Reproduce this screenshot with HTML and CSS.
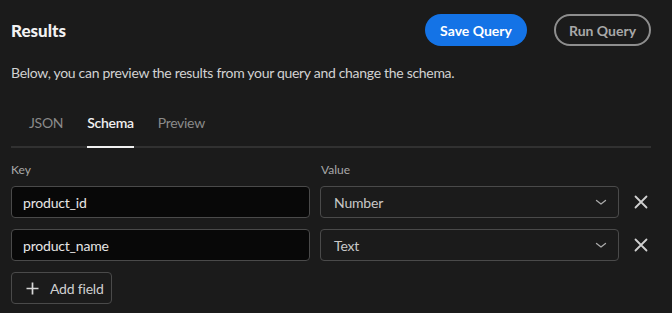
FILE: index.html
```html
<!DOCTYPE html>
<html lang="en">
<head>
    <meta charset="UTF-8">
    <title>Results</title>
    <link rel="stylesheet" href="styles.css">
</head>
<body>
    <div class="panel">
        <div class="header">
            <h1 class="title">Results</h1>
            <div class="actions">
                <button class="btn btn-primary">Save Query</button>
                <button class="btn btn-outline">Run Query</button>
            </div>
        </div>
        <p class="description">Below, you can preview the results from your query and change the schema.</p>

        <div class="tabs">
            <div class="tab">JSON</div>
            <div class="tab active">Schema</div>
            <div class="tab">Preview</div>
        </div>

        <div class="schema">
            <div class="schema-row labels">
                <div class="label">Key</div>
                <div class="label">Value</div>
                <div class="spacer"></div>
            </div>
            <div class="schema-row">
                <div class="key-input">product_id</div>
                <div class="select">
                    <span>Number</span>
                    <svg class="chevron" width="12" height="12" viewBox="0 0 12 12"><path d="M1.5 4.5 L6 8 L10.5 4.5" fill="none" stroke="#a8a8a8" stroke-width="1.3" stroke-linecap="round" stroke-linejoin="round"/></svg>
                </div>
                <button class="remove">
                    <svg width="14" height="14" viewBox="0 0 14 14"><path d="M1.5 1.5 L12.5 12.5 M12.5 1.5 L1.5 12.5" stroke="#d0d0d0" stroke-width="1.8" stroke-linecap="round"/></svg>
                </button>
            </div>
            <div class="schema-row">
                <div class="key-input">product_name</div>
                <div class="select">
                    <span>Text</span>
                    <svg class="chevron" width="12" height="12" viewBox="0 0 12 12"><path d="M1.5 4.5 L6 8 L10.5 4.5" fill="none" stroke="#a8a8a8" stroke-width="1.3" stroke-linecap="round" stroke-linejoin="round"/></svg>
                </div>
                <button class="remove">
                    <svg width="14" height="14" viewBox="0 0 14 14"><path d="M1.5 1.5 L12.5 12.5 M12.5 1.5 L1.5 12.5" stroke="#d0d0d0" stroke-width="1.8" stroke-linecap="round"/></svg>
                </button>
            </div>
        </div>

        <button class="add-field">
            <svg width="13" height="13" viewBox="0 0 13 13"><path d="M6.5 0.5 V12.5 M0.5 6.5 H12.5" stroke="#d8d8d8" stroke-width="1.7"/></svg>
            <span>Add field</span>
        </button>
    </div>
</body>
</html>
```

FILE: styles.css
```css
body {
    margin: 0;
    background-color: #1b1b1b;
    color: #e0e0e0;
    font-family: Lato, 'Noto Sans', sans-serif;
}

.panel {
    width: 640px;
    padding: 14px 21px 0 11px;
}

.header {
    display: flex;
    justify-content: space-between;
    align-items: center;
    height: 32px;
}

.title {
    margin: 0;
    font-size: 17px;
    font-weight: 900;
    color: #f2f2f2;
}

.actions {
    display: flex;
    gap: 27px;
}

.btn {
    height: 32px;
    border-radius: 16px;
    font-family: inherit;
    font-size: 14px;
    font-weight: 700;
    cursor: pointer;
}

.btn-primary {
    width: 102px;
    background-color: #1473e6;
    border: none;
    color: #ffffff;
}

.btn-outline {
    width: 97px;
    background: transparent;
    border: 2px solid #8e8e8e;
    color: #a8a8a8;
}

.description {
    margin: 17px 0 0;
    font-size: 14px;
    line-height: 20px;
    letter-spacing: -0.3px;
    color: #d2d2d2;
}

.tabs {
    display: flex;
    gap: 24px;
    margin-top: 25px;
    padding-left: 18px;
    border-bottom: 2px solid #313131;
}

.tab {
    padding: 6px 0 15px;
    font-size: 14px;
    letter-spacing: -0.3px;
    color: #8a8a8a;
    margin-bottom: -2px;
    border-bottom: 2px solid transparent;
}

.tab.active {
    color: #f0f0f0;
    font-weight: 600;
    border-bottom-color: #f0f0f0;
}

.schema {
    margin-top: 14px;
    display: flex;
    flex-direction: column;
    gap: 11px;
}

.schema-row {
    display: flex;
    align-items: center;
    gap: 11px;
}

.schema-row.labels {
    margin-bottom: -2px;
}

.label {
    width: 299px;
    font-size: 12px;
    color: #a8a8a8;
}

.spacer {
    width: 20px;
}

.key-input {
    box-sizing: border-box;
    width: 300px;
    height: 32px;
    padding: 0 11px;
    display: flex;
    align-items: center;
    background-color: #080808;
    border: 1px solid #4a4a4a;
    border-radius: 4px;
    font-size: 14px;
    letter-spacing: -0.2px;
    color: #e6e6e6;
}

.select {
    box-sizing: border-box;
    width: 300px;
    height: 32px;
    padding: 0 11px 0 13px;
    display: flex;
    align-items: center;
    justify-content: space-between;
    border: 1px solid #4a4a4a;
    border-radius: 4px;
    font-size: 14px;
    letter-spacing: -0.2px;
    color: #c8c8c8;
}

.schema-row .key-input + .select {
    margin-left: -1px;
}

.remove {
    width: 20px;
    height: 20px;
    padding: 0;
    margin-left: 1px;
    background: none;
    border: none;
    display: flex;
    align-items: center;
    justify-content: center;
}

.add-field {
    box-sizing: border-box;
    margin-top: 11px;
    width: 101px;
    height: 32px;
    padding: 0 0 0 14px;
    display: flex;
    align-items: center;
    gap: 11px;
    white-space: nowrap;
    background: transparent;
    border: 1px solid #4a4a4a;
    border-radius: 4px;
    font-family: inherit;
    font-size: 14px;
    letter-spacing: -0.2px;
    color: #d0d0d0;
}
```
